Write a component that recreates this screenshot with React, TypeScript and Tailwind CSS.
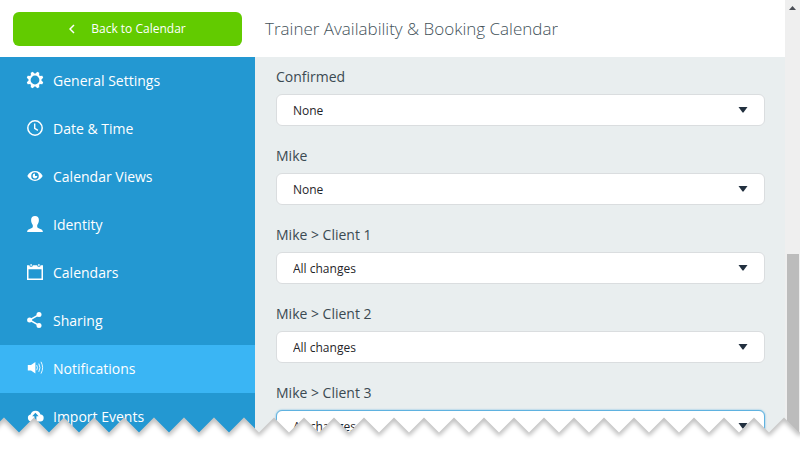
import { ReactNode } from "react";

const menuItems = [
  { name: "General Settings", icon: <GearIcon /> },
  { name: "Date & Time", icon: <ClockIcon /> },
  { name: "Calendar Views", icon: <EyeIcon /> },
  { name: "Identity", icon: <PersonIcon /> },
  { name: "Calendars", icon: <CalendarIcon /> },
  { name: "Sharing", icon: <ShareIcon /> },
  { name: "Notifications", icon: <SoundIcon />, active: true },
  { name: "Import Events", icon: <CloudIcon /> },
];

const calendars = [
  { id: "confirmed", label: "Confirmed", value: "None" },
  { id: "mike", label: "Mike", value: "None" },
  { id: "client1", label: "Mike > Client 1", value: "All changes" },
  { id: "client2", label: "Mike > Client 2", value: "All changes" },
  { id: "client3", label: "Mike > Client 3", value: "All changes", selected: true },
];

function Icon({ children }: { children: ReactNode }) {
  return (
    <svg viewBox="0 0 16 16" className="mb-[2px] size-4 shrink-0 overflow-visible" fill="currentColor" aria-hidden="true">
      {children}
    </svg>
  );
}

function GearIcon() {
  const teeth = [22.5, 67.5, 112.5, 157.5, 202.5, 247.5, 292.5, 337.5];
  return (
    <Icon>
      <circle cx="8" cy="8" r="5.4" fill="none" stroke="currentColor" strokeWidth="2" />
      {teeth.map((angle) => (
        <path key={angle} d="M5.900 2.300 6.900-.4h2.200l1 2.700z" transform={`rotate(${angle} 8 8)`} />
      ))}
    </Icon>
  );
}

function ClockIcon() {
  return (
    <Icon>
      <circle cx="8" cy="8" r="7.2" fill="none" stroke="currentColor" strokeWidth="1.5" />
      <path d="M7.7 3.6v4.7l3.2 2" fill="none" stroke="currentColor" strokeWidth="1.4" />
    </Icon>
  );
}

function EyeIcon() {
  return (
    <Icon>
      <path
        fillRule="evenodd"
        d="M.3 8C2 5 4.800 3.100 8 3.100S14 5 15.700 8C14 11 11.200 12.900 8 12.900S2 11 .3 8zM8 4.200a3.800 3.800 0 1 0 0 7.600 3.800 3.800 0 0 0 0-7.600z"
      />
      <path d="M8 5.600a2.400 2.400 0 1 0 2.400 2.400H8z" />
    </Icon>
  );
}

function PersonIcon() {
  return (
    <Icon>
      <path d="M8 0c2.500 0 3.900 1.500 3.900 4 0 1.900-.7 3.800-1.700 5v1.800c0 1.300 1.500 1.500 3.200 2.100 1.600.5 2.400 1.200 2.500 3.100H.1c.1-1.900.9-2.600 2.500-3.100 1.700-.6 3.200-.8 3.200-2.100V9C4.800 7.800 4.100 5.900 4.100 4 4.100 1.500 5.500 0 8 0z" />
    </Icon>
  );
}

function CalendarIcon() {
  return (
    <Icon>
      <path fillRule="evenodd" d="M0 1.200h2.400a1.700 1.700 0 0 0 3.400 0h4.400a1.700 1.700 0 0 0 3.400 0H16V16H0zM1.500 5.200v9.300h13V5.200z" />
      <path d="M3.500 0h1.200v2.200H3.500zM11.300 0h1.200v2.200h-1.200z" />
    </Icon>
  );
}

function ShareIcon() {
  return (
    <Icon>
      <path d="M12 2.600 2.600 8 12 13.400" fill="none" stroke="currentColor" strokeWidth="1.500" />
      <circle cx="12" cy="2.600" r="2.500" />
      <circle cx="2.600" cy="8" r="2.500" />
      <circle cx="12" cy="13.400" r="2.500" />
    </Icon>
  );
}

function SoundIcon() {
  return (
    <Icon>
      <path d="M.8 5H4l4.400-3v11.400L4 10.400H.8z" />
      <path
        d="M9.700 5.200q1.500 2.500 0 5M11.800 3.600q2.300 4.100 0 8.200M14 1.800q3.200 5.900 0 11.800"
        fill="none"
        stroke="currentColor"
        strokeWidth=".9"
      />
    </Icon>
  );
}

function CloudIcon() {
  return (
    <Icon>
      <path
        fillRule="evenodd"
        d="M4.200 13.500A3.500 3.500 0 0 1 3.600 6.600 5.100 5.100 0 0 1 13.500 6.500a3.500 3.500 0 0 1-.7 7zM8.400 4.800 5.200 8.300h2.200V12h2V8.300h2.200z"
      />
    </Icon>
  );
}

function NotificationSelect({ id, label, value, selected }: { id: string; label: string; value: string; selected?: boolean }) {
  return (
    <div>
      <label htmlFor={id} className="block h-6 text-sm leading-6 text-[#3b4a52]">{label}</label>
      <div className="relative mt-[5px]">
        <select
          id={id}
          defaultValue={value}
          className={
            selected
              ? "block w-full h-8 appearance-none rounded-md border border-[#5fb2e0] bg-white px-4 pt-px text-xs text-[#1f2529] shadow-[0_0_2px_#5fb2e0]"
              : "block w-full h-8 appearance-none rounded-md border border-[#dadddf] bg-white px-4 pt-px text-xs text-[#1f2529]"
          }
        >
          <option>None</option>
          <option>All changes</option>
        </select>
        <svg viewBox="0 0 10 6" className="pointer-events-none absolute right-[17px] top-[13px] h-[6px] w-[10px]" aria-hidden="true">
          <path d="M.5 0h9L5.500 5.600h-1z" fill="#22303f" />
        </svg>
      </div>
    </div>
  );
}

// zigzag edge along the bottom, one tooth every 30px
function TornEdge() {
  const points: string[] = [];
  for (let i = -1; i < 130; i++) {
    points.push(`${i * 30 + 4},0.500`, `${i * 30 + 19},15.500`);
  }
  const edge = points.join(" ");

  return (
    <svg className="pointer-events-none absolute bottom-0 left-0 h-11 w-full" aria-hidden="true">
      <defs>
        <clipPath id="paper">
          <polygon points={`${edge} 3889,60 -26,60`} />
        </clipPath>
        <filter id="soft" x="-5%" y="-50%" width="110%" height="200%">
          <feGaussianBlur stdDeviation="2" />
        </filter>
      </defs>
      <g clipPath="url(#paper)">
        <rect width="100%" height="100%" fill="#fff" />
        <polygon points={`${edge} 3889,-30 -26,-30`} transform="translate(0 4)" fill="#000" fillOpacity="0.24" filter="url(#soft)" />
      </g>
    </svg>
  );
}

export default function App() {
  return (
    <div className="relative flex h-screen overflow-hidden bg-white font-['Open_Sans',sans-serif]">
      <div className="flex min-w-0 flex-1 flex-col">
        <header className="flex h-[57px] shrink-0 items-center bg-white">
          <div className="w-[255px] shrink-0 px-[13px]">
            <button type="button" className="flex h-[34px] w-full items-center justify-center gap-4 rounded-md bg-[#62cb00] text-xs font-medium text-white">
              <svg viewBox="0 0 6 10" className="h-[10px] w-[6px]" fill="none" stroke="currentColor" strokeWidth="1.500" aria-hidden="true">
                <path d="M5 1 1 5l4 4" />
              </svg>
              Back to Calendar
            </button>
          </div>
          <h1 className="truncate pl-[10px] text-[17px] font-light text-[#43525a]">Trainer Availability &amp; Booking Calendar</h1>
        </header>

        <div className="flex min-h-0 flex-1">
          <nav className="w-[255px] shrink-0 overflow-hidden bg-[#2398d2]">
            {menuItems.map((item) => (
              <a
                key={item.name}
                href="#"
                className={
                  item.active
                    ? "flex h-12 items-center gap-[10px] bg-[#3ab5f4] pl-[27px] text-sm font-medium text-white"
                    : "flex h-12 items-center gap-[10px] pl-[27px] text-sm font-medium text-white"
                }
              >
                {item.icon}
                {item.name}
              </a>
            ))}
          </nav>

          <main className="flex min-w-0 flex-1 flex-col gap-[18px] overflow-hidden bg-[#e9eeef] pt-2 pr-5 pl-[21px]">
            {calendars.map((calendar) => (
              <NotificationSelect key={calendar.id} {...calendar} />
            ))}
          </main>
        </div>
      </div>

      {/* scrollbar */}
      <div className="flex w-[15px] shrink-0 flex-col items-center bg-[#efefef]">
        <svg viewBox="0 0 7 4" className="mt-[6px] h-1 w-[7px]" aria-hidden="true">
          <path d="M0 4 3.500 0 7 4z" fill="#4a4d55" />
        </svg>
        <div className="mt-[244px] w-3 flex-1 bg-[#bcbcbc]"></div>
      </div>

      <TornEdge />
    </div>
  );
}
